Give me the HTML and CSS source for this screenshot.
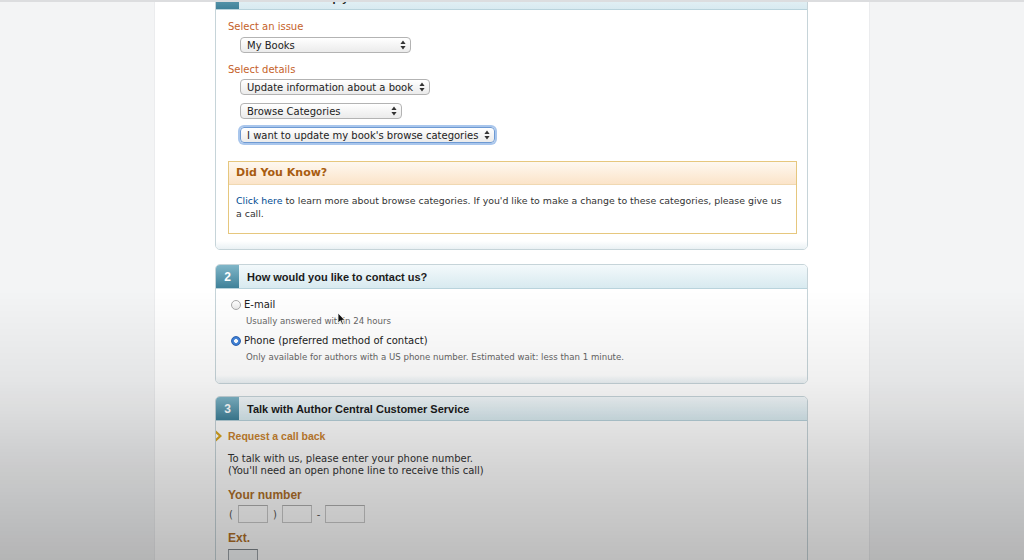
FILE: index.html
```html
<!DOCTYPE html>
<html lang="en">
<head>
    <meta charset="UTF-8">
    <title>Contact Author Central</title>
    <link rel="stylesheet" href="styles.css">
</head>
<body>

<div class="column">
    <div class="panels">

        <section class="panel">
            <div class="panel-head">
                <span class="step">1</span>
                <h2>What can we help you with?</h2>
            </div>
            <div class="panel-body first">
                <div class="field-label">Select an issue</div>
                <div class="select-row">
                    <div class="select w-books">My Books
                        <svg class="updown" viewBox="0 0 6 10" width="6" height="10"><path d="M3 0.5 L5.6 4 H0.4 Z M3 9.5 L5.6 6 H0.4 Z" fill="#333"/></svg>
                    </div>
                </div>
                <div class="field-label spaced">Select details</div>
                <div class="select-row">
                    <div class="select">Update information about a book
                        <svg class="updown" viewBox="0 0 6 10" width="6" height="10"><path d="M3 0.5 L5.6 4 H0.4 Z M3 9.5 L5.6 6 H0.4 Z" fill="#333"/></svg>
                    </div>
                </div>
                <div class="select-row">
                    <div class="select w-browse">Browse Categories
                        <svg class="updown" viewBox="0 0 6 10" width="6" height="10"><path d="M3 0.5 L5.6 4 H0.4 Z M3 9.5 L5.6 6 H0.4 Z" fill="#333"/></svg>
                    </div>
                </div>
                <div class="select-row">
                    <div class="select focused">I want to update my book's browse categories
                        <svg class="updown" viewBox="0 0 6 10" width="6" height="10"><path d="M3 0.5 L5.6 4 H0.4 Z M3 9.5 L5.6 6 H0.4 Z" fill="#333"/></svg>
                    </div>
                </div>

                <div class="tip">
                    <div class="tip-head">Did You Know?</div>
                    <p class="tip-body"><a href="#">Click here</a> to learn more about browse categories. If you'd like to make a change to these categories, please give us a call.</p>
                </div>
            </div>
            <div class="panel-foot"></div>
        </section>

        <section class="panel tight">
            <div class="panel-head">
                <span class="step">2</span>
                <h2>How would you like to contact us?</h2>
            </div>
            <div class="panel-body second">
                <div class="option">
                    <span class="radio"></span>
                    <span>E-mail</span>
                </div>
                <div class="note">Usually answered within 24 hours</div>
                <div class="option later">
                    <span class="radio checked"></span>
                    <span>Phone (preferred method of contact)</span>
                </div>
                <div class="note">Only available for authors with a US phone number. Estimated wait: less than 1 minute.</div>
            </div>
            <div class="panel-foot"></div>
        </section>

        <section class="panel">
            <div class="panel-head">
                <span class="step">3</span>
                <h2>Talk with Author Central Customer Service</h2>
            </div>
            <div class="panel-body third">
                <div class="callback">
                    <svg viewBox="0 0 8 12" width="8" height="12"><path d="M1 0.5 L7 6 L1 11.5 L1 8.5 L3.8 6 L1 3.5 Z" fill="#d9a520"/></svg>
                    <span>Request a call back</span>
                </div>
                <p class="intro">To talk with us, please enter your phone number.<br>(You'll need an open phone line to receive this call)</p>
                <div class="form-label">Your number</div>
                <div class="phone-row">
                    <span>(</span>
                    <span class="box w-30"></span>
                    <span>)</span>
                    <span class="box w-30"></span>
                    <span>-</span>
                    <span class="box w-40"></span>
                </div>
                <div class="form-label ext">Ext.</div>
                <span class="box ext-box"></span>
            </div>
        </section>

    </div>
</div>

<!-- screen capture extras: browser edge, pointer, vignette -->
<div class="chrome-line"></div>
<svg class="pointer" viewBox="0 0 9 14" width="9" height="14"><path d="M1 1 L1 11 L3.4 8.8 L5 12.6 L6.4 12 L4.9 8.3 L8 8.3 Z" fill="#111" stroke="#fff" stroke-width="0.8"/></svg>
<div class="vignette"></div>

</body>
</html>
```

FILE: styles.css
```css
body {
    margin: 0;
    background-color: #f3f4f5;
    font-family: "DejaVu Sans", Verdana, sans-serif;
    color: #333;
    overflow: hidden;
}
.column {
    width: 716px;
    height: 560px;
    margin: 0 auto;
    background: #fff;
    border-left: 1px solid #ebecee;
    border-right: 1px solid #ebecee;
    box-sizing: border-box;
    overflow: hidden;
}
.panels {
    width: 593px;
    margin: -15px 0 0 60px;
}

/* panels */
.panel {
    background: #fff;
    border: 1px solid #c6d4d9;
    border-radius: 5px;
    margin-bottom: 14px;
    overflow: hidden;
}
.panel.tight {
    margin-bottom: 12px;
}
.panel-head {
    display: flex;
    height: 23px;
    background: linear-gradient(#f3f9fb, #d8eaf0);
    border-bottom: 1px solid #b9d3dc;
}
.step {
    width: 23px;
    display: flex;
    align-items: center;
    justify-content: center;
    background: linear-gradient(#80b6c8, #3f8199);
    color: #fff;
    font: bold 12px "Liberation Sans", Arial, sans-serif;
}
.panel-head h2 {
    margin: 0 0 0 8px;
    align-self: center;
    font: bold 11px "Liberation Sans", Arial, sans-serif;
    color: #1b1b1b;
}
.panel-body {
    padding: 10px 10px 0 12px;
}
.panel-body.first {
    padding-bottom: 7px;
}
.panel-foot {
    height: 8px;
    background: linear-gradient(#fff, #eaf1f4);
}

/* step 1 */
.field-label {
    font-size: 10px;
    line-height: 14px;
    color: #c5622a;
    margin-bottom: 3px;
}
.field-label.spaced {
    margin-top: 10px;
    margin-bottom: 2px;
}
.select-row {
    display: flex;
    padding-left: 12px;
    margin-bottom: 8px;
}
.select {
    display: flex;
    align-items: center;
    justify-content: space-between;
    gap: 6px;
    height: 16px;
    padding: 0 4px 0 6px;
    box-sizing: border-box;
    border: 1px solid #b3b3b3;
    border-radius: 4px;
    background: linear-gradient(#ffffff, #ebebeb);
    font-size: 10px;
    color: #222;
    white-space: nowrap;
}
.select.w-books { width: 171px; }
.select.w-browse { width: 162px; }
.select.focused {
    border-color: #6e9ad3;
    box-shadow: 0 0 0 2px #a9c6ec;
}
.updown { flex: none; }

.tip {
    margin-top: 18px;
    border: 1px solid #e6c77e;
}
.tip-head {
    height: 22px;
    line-height: 22px;
    padding-left: 7px;
    background: linear-gradient(#fef8f0, #fbe4c9);
    border-bottom: 1px solid #f0d8b2;
    font-weight: bold;
    font-size: 11px;
    color: #a85c10;
}
.tip-body {
    margin: 0;
    padding: 9px 8px 13px 7px;
    font-size: 9.4px;
    line-height: 13px;
    color: #333;
}
.tip-body a {
    color: #004b91;
    text-decoration: none;
}

/* step 2 */
.panel-body.second {
    padding-top: 9px;
    padding-bottom: 11px;
}
.option {
    display: flex;
    align-items: center;
    gap: 3px;
    padding-left: 3px;
    font-size: 10px;
    line-height: 14px;
    color: #222;
}
.option.later {
    margin-top: 6px;
}
.radio {
    width: 10px;
    height: 10px;
    box-sizing: border-box;
    border-radius: 50%;
    border: 1px solid #a9a9a9;
    background: linear-gradient(#ffffff, #e9e9e9);
}
.radio.checked {
    border-color: #2f67b6;
    background: radial-gradient(circle, #fff 0, #fff 1.6px, #4b8de0 2.2px, #2a6bcb 100%);
}
.note {
    padding-left: 18px;
    margin-top: 3px;
    font-size: 8.6px;
    line-height: 13px;
    color: #666;
}

/* step 3 */
.panel-body.third {
    padding-top: 8px;
    padding-bottom: 20px;
}
.callback {
    display: flex;
    align-items: center;
    gap: 5px;
    margin-left: -13px;
    font: bold 10.5px "Liberation Sans", Arial, sans-serif;
    line-height: 14px;
    color: #cc8530;
}
.intro {
    margin: 10px 0 0 0;
    font-size: 10px;
    line-height: 12px;
    color: #333;
}
.form-label {
    margin: 11px 0 2px 0;
    font: bold 12px "Liberation Sans", Arial, sans-serif;
    line-height: 15px;
    color: #b0702a;
}
.form-label.ext {
    margin-top: 8px;
}
.phone-row {
    display: flex;
    align-items: center;
    gap: 5px;
    padding-left: 1px;
    font-size: 10px;
    color: #555;
}
.box {
    display: block;
    height: 18px;
    box-sizing: border-box;
    border: 1px solid #cacaca;
    border-top-color: #b0b0b0;
    background: #fff;
}
.box.w-30 { width: 30px; }
.box.w-40 { width: 40px; }
.box.ext-box {
    width: 30px;
    margin: 3px 0 0 0;
    border-color: #9ea4aa;
    border-top-color: #7f858b;
    background: #f6f8fa;
}

/* overlays */
.chrome-line {
    position: fixed;
    top: 0;
    left: 0;
    right: 0;
    height: 2px;
    background: #dcdddf;
}
.pointer {
    position: fixed;
    left: 337px;
    top: 312px;
}
.vignette {
    position: fixed;
    inset: 0;
    pointer-events: none;
    background: linear-gradient(to bottom, rgba(0,0,0,0) 0, rgba(0,0,0,0) 290px, rgba(0,0,0,0.06) 380px, rgba(0,0,0,0.17) 470px, rgba(0,0,0,0.26) 560px);
}
```
